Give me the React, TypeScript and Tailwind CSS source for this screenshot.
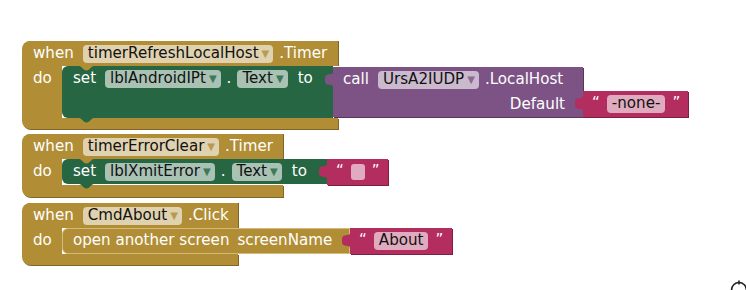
import React from 'react'

// App Inventor block palette
const GOLD = '#b18e35'
const GREEN = '#266643'
const PURPLE = '#7d5385'
const RED = '#b32d5e'

type Tone = 'gold' | 'green' | 'purple' | 'red'

const pillBg: Record<Tone, string> = {
  gold: 'bg-[#e0d2ae]',
  green: 'bg-[#a9c2b4]',
  purple: 'bg-[#cbbace]',
  red: 'bg-[#e1abbf]',
}

const arrowColor: Record<Tone, string> = {
  gold: 'text-[#b89b52]',
  green: 'text-[#3d7a58]',
  purple: 'text-[#8c6a93]',
  red: 'text-[#b32d5e]',
}

function Field({ label, tone, arrow = true }: { label: string; tone: Tone; arrow?: boolean }) {
  return (
    <span
      className={`${pillBg[tone]} flex h-[18px] items-center rounded-[4px] pl-[5px] ${arrow ? 'pr-[4px]' : 'pr-[5px]'} text-[#111]`}
    >
      <span>{label}</span>
      {arrow && <span className={`${arrowColor[tone]} ml-[3px] text-[10px] leading-none`}>▼</span>}
    </span>
  )
}

// puzzle tab sticking out on the left of a value block
function Tab({ color }: { color: string }) {
  return (
    <svg className="absolute left-[-8px] top-[5px]" width="9" height="15" viewBox="0 0 9 15">
      <path d="M9 0 L8 0 C8 4 0 0 0 6 L0 9 C0 15 8 11 8 15 L9 15 Z" fill={color} />
    </svg>
  )
}

// previous/next connection notches on statement blocks
function TopNotch({ color }: { color: string }) {
  return (
    <svg className="absolute left-[17px] top-0" width="15" height="5" viewBox="0 0 15 5">
      <path d="M0 0 C3 0 4 4.5 7.5 4.5 C11 4.5 12 0 15 0 Z" fill={color} />
    </svg>
  )
}

function BottomNotch({ color }: { color: string }) {
  return (
    <svg className="absolute bottom-[-5px] left-[17px]" width="15" height="5" viewBox="0 0 15 5">
      <path d="M0 0 C3 0 4 4.5 7.5 4.5 C11 4.5 12 0 15 0 Z" fill={color} />
    </svg>
  )
}

function TextBlock({ children, width }: { children: React.ReactNode; width: string }) {
  return (
    <div className={`relative flex h-[26px] ${width} items-center gap-[7px] bg-[#b32d5e] pl-[9px] shadow-[1px_1px_0_#7c1f41]`}>
      <Tab color={RED} />
      <span>“</span>
      {children}
      <span>”</span>
    </div>
  )
}

function EventBlock({
  width,
  head,
  children,
  gap,
  bottom,
}: {
  width: string
  head: React.ReactNode
  children: React.ReactNode
  gap: string
  bottom: string
}) {
  return (
    <div className={`flex flex-col items-start ${gap}`}>
      <div className={`flex h-[25px] ${width} items-center rounded-tl-[8px] bg-[#b18e35] pl-[11px] shadow-[1px_0_0_#7f6526]`}>
        {head}
      </div>
      <div className="flex items-stretch">
        <div className="flex w-[40px] bg-[#b18e35]">
          <div className="flex h-[25px] items-center pl-[11px]">do</div>
        </div>
        {children}
      </div>
      <div className={`${bottom} ${width} rounded-bl-[8px] bg-[#b18e35] shadow-[1px_1px_0_#7f6526]`} />
    </div>
  )
}

function ZoomResetIcon() {
  return (
    <svg className="absolute left-[727px] top-[272px]" width="20" height="20" viewBox="0 0 20 20">
      <circle cx="12" cy="18" r="7.5" fill="none" stroke="#222" strokeWidth="1.6" />
      <line x1="12" y1="8.5" x2="12" y2="12.5" stroke="#222" strokeWidth="1.6" />
    </svg>
  )
}

export default function App() {
  return (
    <div className="relative h-[290px] w-[746px] overflow-hidden bg-white pl-[22px] pt-[41px] font-['DejaVu_Sans',sans-serif] text-[15.1px] leading-none text-white">
      <EventBlock
        width="w-[316px]"
        gap=""
        bottom="h-[11px]"
        head={
          <>
            <span>when</span>
            <span className="ml-[9px]">
              <Field label="timerRefreshLocalHost" tone="gold" />
            </span>
            <span className="ml-[6px]">.Timer</span>
          </>
        }
      >
        <div className="flex items-start">
          <div className="relative h-[52px] w-[271px] rounded-l-[6px] bg-[#266643]">
            <TopNotch color={GOLD} />
            <BottomNotch color={GREEN} />
            <div className="flex h-[25px] items-center pl-[11px] pt-[1px]">
              <span>set</span>
              <span className="ml-[9px]">
                <Field label="lblAndroidIPt" tone="green" />
              </span>
              <span className="ml-[6px]">.</span>
              <span className="ml-[6px]">
                <Field label="Text" tone="green" />
              </span>
              <span className="ml-[10px]">to</span>
            </div>
          </div>
          <div className="flex items-start">
            <div className="relative mt-[1px] flex h-[50px] w-[250px] flex-col bg-[#7d5385] shadow-[1px_1px_0_#553859]">
              <Tab color={PURPLE} />
              <div className="flex h-[25px] items-center pl-[10px]">
                <span>call</span>
                <span className="ml-[9px]">
                  <Field label="UrsA2IUDP" tone="purple" />
                </span>
                <span className="ml-[6px]">.LocalHost</span>
              </div>
              <div className="flex h-[25px] items-center justify-end pr-[18px]">Default</div>
            </div>
            <div className="mt-[25px]">
              <TextBlock width="w-[105px]">
                <Field label="-none-" tone="red" arrow={false} />
              </TextBlock>
            </div>
          </div>
        </div>
      </EventBlock>

      <EventBlock
        width="w-[261px]"
        gap="mt-[5px]"
        bottom="h-[12px]"
        head={
          <>
            <span>when</span>
            <span className="ml-[9px]">
              <Field label="timerErrorClear" tone="gold" />
            </span>
            <span className="ml-[6px]">.Timer</span>
          </>
        }
      >
        <div className="flex items-start">
          <div className="relative flex h-[25px] w-[265px] items-center rounded-l-[6px] bg-[#266643] pl-[11px] pt-[1px]">
            <TopNotch color={GOLD} />
            <BottomNotch color={GREEN} />
            <span>set</span>
            <span className="ml-[9px]">
              <Field label="lblXmitError" tone="green" />
            </span>
            <span className="ml-[6px]">.</span>
            <span className="ml-[6px]">
              <Field label="Text" tone="green" />
            </span>
            <span className="ml-[10px]">to</span>
          </div>
          <TextBlock width="w-[61px]">
            <span className="h-[16px] w-[14px] rounded-[3px] bg-[#e1abbf]" />
          </TextBlock>
        </div>
      </EventBlock>

      <EventBlock
        width="w-[216px]"
        gap="mt-[6px]"
        bottom="h-[11px]"
        head={
          <>
            <span>when</span>
            <span className="ml-[9px]">
              <Field label="CmdAbout" tone="gold" />
            </span>
            <span className="ml-[6px]">.Click</span>
          </>
        }
      >
        <div className="flex items-start">
          <div className="relative flex h-[26px] w-[288px] items-center rounded-l-[6px] border border-[#d3bb7d] bg-[#b18e35] pl-[10px]">
            <span>open another screen</span>
            <span className="ml-[8px]">screenName</span>
          </div>
          <TextBlock width="w-[102px]">
            <Field label="About" tone="red" arrow={false} />
          </TextBlock>
        </div>
      </EventBlock>

      <ZoomResetIcon />
    </div>
  )
}
